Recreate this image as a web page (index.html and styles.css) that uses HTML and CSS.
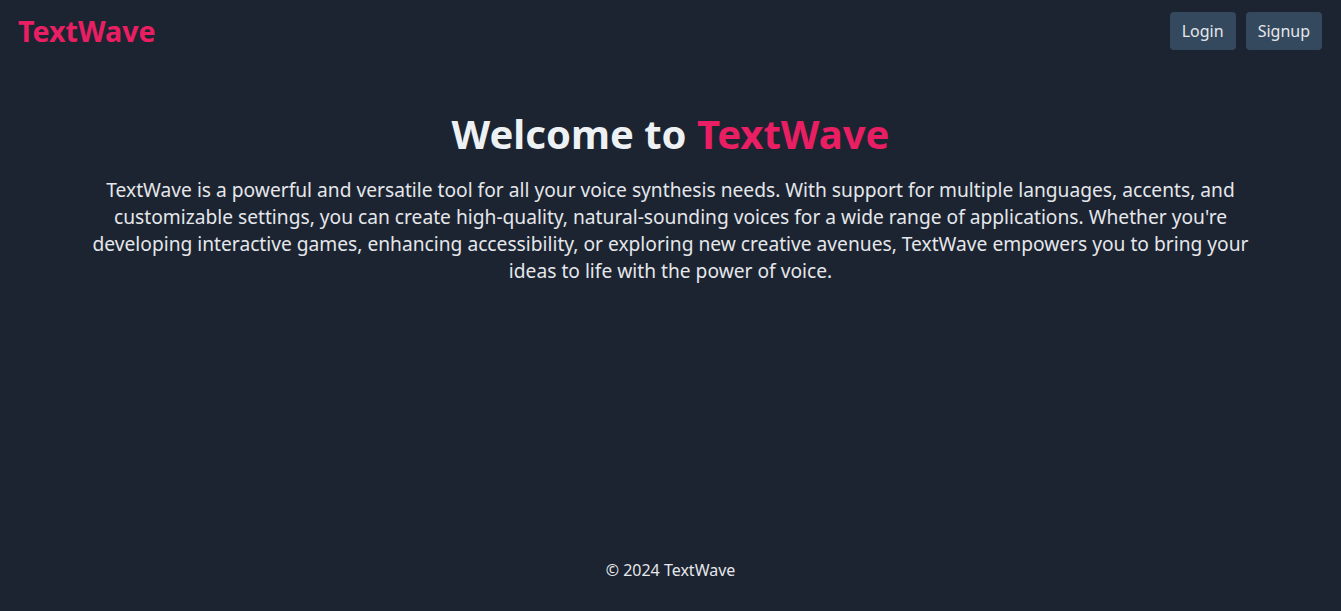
FILE: index.html
```html
<!DOCTYPE html>
<html lang="en">
<head>
<meta charset="utf-8">
<title>TextWave</title>
<link rel="stylesheet" href="styles.css">
</head>
<body>
<div class="page">
  <header class="header">
    <div class="logo">TextWave</div>
    <nav class="nav">
      <button class="btn">Login</button>
      <button class="btn">Signup</button>
    </nav>
  </header>
  <main class="main">
    <h1 class="title">Welcome to <span class="accent">TextWave</span></h1>
    <p class="intro">TextWave is a powerful and versatile tool for all your voice synthesis needs. With support for multiple languages, accents, and customizable settings, you can create high-quality, natural-sounding voices for a wide range of applications. Whether you're developing interactive games, enhancing accessibility, or exploring new creative avenues, TextWave empowers you to bring your ideas to life with the power of voice.</p>
  </main>
  <footer class="footer">© 2024 TextWave</footer>
</div>
</body>
</html>
```
FILE: styles.css
```css
* { box-sizing: border-box; }
html, body { margin: 0; padding: 0; height: 100%; }
body {
  background: #1c2431;
  color: #e5e7eb;
  font-family: "Noto Sans", sans-serif;
}
.page {
  min-height: 100vh;
  display: flex;
  flex-direction: column;
}
.header {
  display: flex;
  align-items: center;
  justify-content: space-between;
  padding: 12px 19px 12px 18px;
}
.logo {
  color: #e91e63;
  font-size: 28.6px;
  font-weight: 700;
  line-height: 38px;
}
.nav { display: flex; gap: 10px; }
.btn {
  background: #34495e;
  color: #e5e7eb;
  border: none;
  border-radius: 4px;
  font-family: "Noto Sans", sans-serif;
  font-size: 16px;
  line-height: 21.5px;
  padding: 9px 12px 7px;
  cursor: pointer;
}
.main {
  flex: 1;
  text-align: center;
  padding: 48px 80px 0;
}
.title {
  margin: 0 0 18px;
  font-size: 40px;
  line-height: 48px;
  font-weight: 700;
  color: #eef1f4;
}
.accent { color: #e91e63; }
.intro {
  margin: 0 auto;
  max-width: 1180px;
  font-size: 19.2px;
  line-height: 27px;
}
.footer {
  text-align: center;
  font-size: 16px;
  line-height: 24px;
  padding: 12px 0 29px;
}
```
